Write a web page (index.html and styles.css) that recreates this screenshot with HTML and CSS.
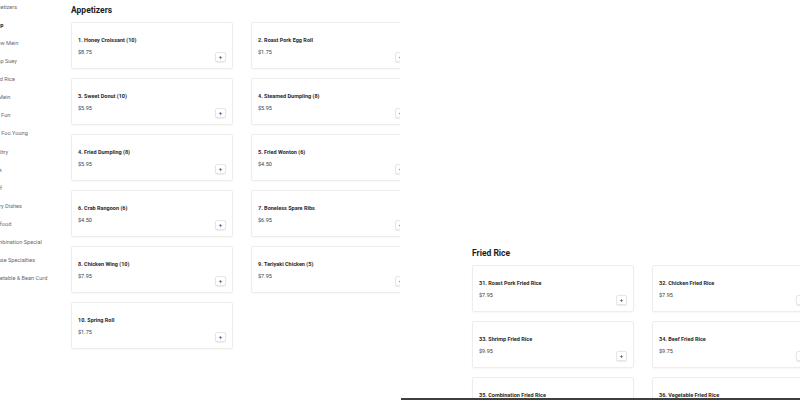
FILE: index.html
```html
<!DOCTYPE html>
<html>
<head>
<meta charset="utf-8">
<link rel="stylesheet" href="styles.css">
</head>
<body>
<div class="screen">
  <div class="frame frame-a">
    <aside class="aside">
      <ul class="nav">
        <li>Appetizers</li>
        <li class="active">Soup</li>
        <li>Chow Mein</li>
        <li>Chop Suey</li>
        <li>Fried Rice</li>
        <li>Lo Mein</li>
        <li>Mei Fun</li>
        <li>Egg Foo Young</li>
        <li>Poultry</li>
        <li>Pork</li>
        <li>Beef</li>
        <li>Curry Dishes</li>
        <li>Seafood</li>
        <li>Combination Special</li>
        <li>House Specialties</li>
        <li>Vegetable &amp; Bean Curd</li>
      </ul>
    </aside>
    <main class="main">
      <h2 class="section-title">Appetizers</h2>
      <div class="grid">
        <div class="card"><div class="info"><div class="name">1. Honey Croissant (10)</div><div class="price">$8.75</div></div><button class="add">+</button></div>
        <div class="card"><div class="info"><div class="name">2. Roast Pork Egg Roll</div><div class="price">$1.75</div></div><button class="add">+</button></div>
        <div class="card"><div class="info"><div class="name">3. Sweet Donut (10)</div><div class="price">$5.95</div></div><button class="add">+</button></div>
        <div class="card"><div class="info"><div class="name">4. Steamed Dumpling (8)</div><div class="price">$5.95</div></div><button class="add">+</button></div>
        <div class="card"><div class="info"><div class="name">4. Fried Dumpling (8)</div><div class="price">$5.95</div></div><button class="add">+</button></div>
        <div class="card"><div class="info"><div class="name">5. Fried Wonton (6)</div><div class="price">$4.50</div></div><button class="add">+</button></div>
        <div class="card"><div class="info"><div class="name">6. Crab Rangoon (6)</div><div class="price">$4.50</div></div><button class="add">+</button></div>
        <div class="card"><div class="info"><div class="name">7. Boneless Spare Ribs</div><div class="price">$6.95</div></div><button class="add">+</button></div>
        <div class="card"><div class="info"><div class="name">8. Chicken Wing (10)</div><div class="price">$7.95</div></div><button class="add">+</button></div>
        <div class="card"><div class="info"><div class="name">9. Teriyaki Chicken (5)</div><div class="price">$7.95</div></div><button class="add">+</button></div>
        <div class="card"><div class="info"><div class="name">10. Spring Roll</div><div class="price">$1.75</div></div><button class="add">+</button></div>
      </div>
    </main>
  </div>
  <div class="frame frame-b">
    <aside class="aside"></aside>
    <main class="main">
      <h2 class="section-title">Fried Rice</h2>
      <div class="grid">
        <div class="card"><div class="info"><div class="name">31. Roast Pork Fried Rice</div><div class="price">$7.95</div></div><button class="add">+</button></div>
        <div class="card"><div class="info"><div class="name">32. Chicken Fried Rice</div><div class="price">$7.95</div></div><button class="add">+</button></div>
        <div class="card"><div class="info"><div class="name">33. Shrimp Fried Rice</div><div class="price">$9.95</div></div><button class="add">+</button></div>
        <div class="card"><div class="info"><div class="name">34. Beef Fried Rice</div><div class="price">$9.75</div></div><button class="add">+</button></div>
        <div class="card"><div class="info"><div class="name">35. Combination Fried Rice</div><div class="price">$10.95</div></div><button class="add">+</button></div>
        <div class="card"><div class="info"><div class="name">36. Vegetable Fried Rice</div><div class="price">$7.95</div></div><button class="add">+</button></div>
      </div>
    </main>
  </div>
</div>
</body>
</html>
```

FILE: styles.css
```css
* { box-sizing: border-box; }
html, body { margin: 0; padding: 0; background: #fff; }
body {
  width: 800px;
  height: 400px;
  overflow: hidden;
  font-family: Roboto, "Liberation Sans", sans-serif;
  color: #222;
}
.screen {
  display: flex;
  align-items: flex-start;
  gap: 1px;
  width: 800px;
  height: 400px;
}
.frame {
  display: flex;
  overflow: hidden;
  background: #fff;
}
.frame-a {
  width: 400px;
  height: 400px;
}
.frame-b {
  width: 399px;
  height: 157px;
  margin-top: 243px;
  border-bottom: 2px solid #3f3f3f;
}
.aside {
  flex: 0 0 71px;
  width: 71px;
}
.nav {
  list-style: none;
  margin: 0 0 0 -9.5px;
  padding: 3px 0 0 0;
  width: 80px;
  white-space: nowrap;
}
.nav li {
  font-size: 5.6px;
  line-height: 8px;
  height: 18.07px;
  color: #6a6a6a;
}
.nav li.active {
  color: #222;
  font-weight: 700;
}
.main {
  flex: 0 0 auto;
  padding-top: 4px;
}
.section-title {
  margin: 0 0 6px 0;
  font-size: 8.5px;
  line-height: 12px;
  font-weight: 700;
  color: #1d1d1d;
}
.grid {
  display: grid;
  grid-template-columns: 162px 162px;
  column-gap: 18px;
  row-gap: 9px;
}
.card {
  height: 47px;
  display: flex;
  justify-content: space-between;
  padding: 13px 6px 6px 6px;
  border: 1px solid #ededed;
  border-radius: 2px;
  box-shadow: 0 1px 2px rgba(0, 0, 0, 0.04);
  background: #fff;
}
.info {
  display: flex;
  flex-direction: column;
  gap: 4px;
}
.name {
  font-size: 5.5px;
  line-height: 8px;
  font-weight: 700;
  color: #2a2a2a;
  white-space: nowrap;
}
.price {
  font-size: 5.5px;
  line-height: 8px;
  color: #3a3a3a;
}
.add {
  align-self: flex-end;
  width: 11px;
  height: 10px;
  padding: 0;
  margin: 0;
  border: 1px solid #e6e6e6;
  border-radius: 2px;
  background: #fff;
  box-shadow: 0 1px 1px rgba(0, 0, 0, 0.08);
  font-family: Roboto, "Liberation Sans", sans-serif;
  font-size: 6px;
  line-height: 8px;
  color: #333;
  text-align: center;
}
```
